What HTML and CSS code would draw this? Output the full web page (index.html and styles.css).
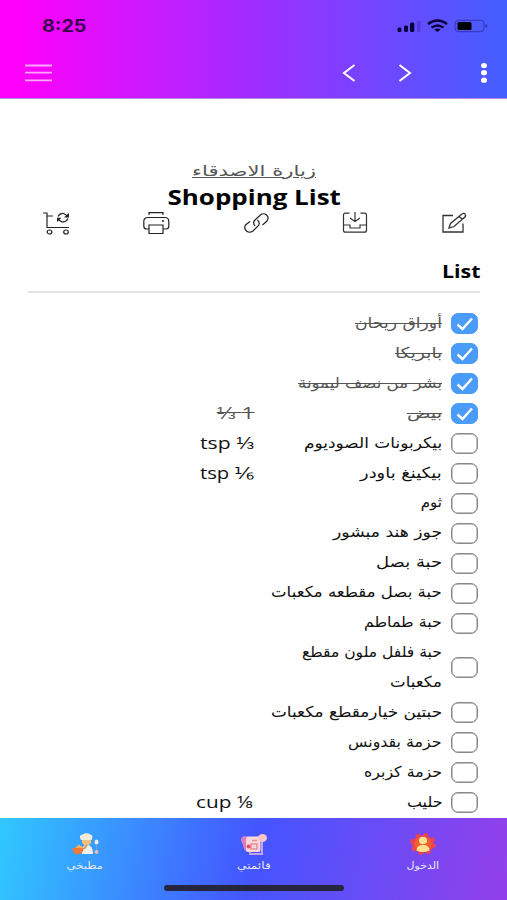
FILE: index.html
```html
<!DOCTYPE html>
<html lang="ar">
<head>
<meta charset="UTF-8">
<meta name="viewport" content="width=device-width, initial-scale=1.0">
<title>Shopping List</title>
<link rel="stylesheet" href="styles.css">
</head>
<body>
    <header class="topbar">
        <div class="status">
            <span class="clock">8:25</span>
            <svg class="status-icons" width="92" height="14" viewBox="0 0 92 14">
                <g fill="#080038">
                    <rect x="0.500" y="8.500" width="4" height="4.500" rx="1.500"/>
                    <rect x="7" y="6.500" width="4" height="6.500" rx="1.500"/>
                    <rect x="13" y="3.500" width="4.300" height="9.500" rx="1.500"/>
                    <rect x="20" y="1.500" width="3.500" height="11.500" rx="1.500" opacity=".2"/>
                    <path d="M40.500 13l3.200-2.500q-3.200-2-6.400 0z"/>
                </g>
                <g fill="none" stroke="#080038" stroke-width="2.300">
                    <path d="M31 5q9.500-7 19 0"/>
                    <path d="M34.500 8.700q6-4.500 12 0"/>
                </g>
                <rect x="58" y="1.300" width="29" height="11.400" rx="3.500" fill="none" stroke="#080038" stroke-opacity=".4"/>
                <rect x="60.500" y="3" width="14" height="8" rx="1.500" fill="#000"/>
                <path d="M88.500 5v4q2-.5 2-2t-2-2z" fill="#080038" opacity=".4"/>
            </svg>
        </div>
        <div class="nav">
            <svg width="28" height="20" viewBox="0 0 28 20" stroke="#fff" stroke-width="1.800" opacity=".65">
                <path d="M0 2.500h27M0 9.700h27M0 17.400h27"/>
            </svg>
            <svg class="prev" width="14" height="20" viewBox="0 0 14 20" fill="none" stroke="#fff" stroke-width="2">
                <path d="M12.500 2L2 10l10.500 8"/>
            </svg>
            <svg class="next" width="14" height="20" viewBox="0 0 14 20" fill="none" stroke="#fff" stroke-width="2">
                <path d="M1.500 2L12 10 1.500 18"/>
            </svg>
            <svg class="more" width="8" height="22" viewBox="0 0 8 22" fill="#fff">
                <ellipse cx="4" cy="3.500" rx="3" ry="2.600"/>
                <ellipse cx="4" cy="10.700" rx="3" ry="2.600"/>
                <ellipse cx="4" cy="18.200" rx="3" ry="2.600"/>
            </svg>
        </div>
    </header>

    <main class="page">
        <div class="recipe"><a class="recipe-link" data-width="124" dir="rtl">زيارة الاصدقاء</a></div>
        <h1 class="title"><span data-width="173">Shopping List</span></h1>

        <div class="tools">
            <svg width="28" height="24" viewBox="0 0 28 24" fill="none" stroke="#222" stroke-width="1.200">
                <path d="M0 2h4v14.500h22M4 5h6"/>
                <ellipse cx="6.500" cy="21" rx="2.300" ry="2"/>
                <ellipse cx="23" cy="21" rx="2.300" ry="2"/>
                <path d="M15 5.500Q17 2 20.500 2.500l3.500 2M25 7.500q-2 4-6 3.300L15.500 9"/>
                <path d="M26 2v4.500h-5zM14 11V6.800h4.500z" fill="#222" stroke="none"/>
            </svg>
            <svg width="28" height="24" viewBox="0 0 28 24" fill="none" stroke="#222" stroke-width="1.200">
                <path d="M6 4V1.700h14V4M6 18H3.500Q.8 18 .8 15v-4.500q0-4 4-4h17q4 0 4 4V15q0 3-2.700 3H20M6 14h14v8.500H6z"/>
                <circle cx="20" cy="10" r="1" fill="#222" stroke="none"/>
            </svg>
            <svg width="28" height="24" viewBox="0 0 28 24" fill="none" stroke="#222" stroke-width="1.200">
                <path d="M13 15q-3-3.500.5-6.500l5-4.500q3-2.500 6 0t.5 6L20.500 14"/>
                <path d="M15.500 9q3.500 3.500 0 6.500l-4.500 4.500q-3.500 2.500-6.500 0t-1-6L8 10.500"/>
            </svg>
            <svg width="28" height="24" viewBox="0 0 28 24" fill="none" stroke="#333" stroke-width="1.200">
                <path d="M7.500 2.200h-4q-2 0-2 2v15q0 2 2 2h19q2 0 2-2v-15q0-2-2-2h-4M1.500 14H8v3h10v-3h6.500M13 1v9.500M8 7l5 3.500L18 7"/>
            </svg>
            <svg width="28" height="24" viewBox="0 0 28 24" fill="none" stroke="#333" stroke-width="1.300">
                <path d="M12 4.500H2v16.500h20V12.500M8 17l1.500-4.500L20 3.800q3-2.500 4.300-.3 1 1.500-1 3L13 15.500zM18 5.500l4 3"/>
            </svg>
        </div>

        <h2 class="section"><span data-width="38">List</span></h2>

        <div class="list" id="list" dir="rtl"></div>
    </main>

    <footer class="tabs">
        <div class="tab">
            <svg width="28" height="22" viewBox="0 0 28 22">
                <path d="M11 21q-1-9 5-9t6 9z" fill="#f1eef0"/>
                <path d="M11 6h9v4q-4.500 6-9 0z" fill="#f0c07c"/>
                <path d="M10 7Q7 2 11.500 1.500q4-2.500 8 0Q23 3 20.500 7z" fill="#f5ead8"/>
                <path d="M1 15h12q-1 6-6 6t-6-6z" fill="#ec7b35"/>
                <path d="M4 15l4-3.500 5 3.500z" fill="#ffb05c"/>
                <path d="M16 12l-3 4" stroke="#d99b58" stroke-width="2"/>
                <ellipse cx="25.500" cy="9" rx="2" ry="2.500" fill="#f4ecee"/>
                <path d="M25.500 11.500V17" stroke="#7f9dcc"/>
                <ellipse cx="25.500" cy="19" rx="2" ry="2" fill="#e5bdac"/>
            </svg>
            <span data-width="36">مطبخي</span>
        </div>
        <div class="tab">
            <svg width="28" height="22" viewBox="0 0 28 22">
                <path d="M1 7q0-4 5-4l4 3v10l-5 2z" fill="#d87fc0"/>
                <path d="M10 19v2h12V8" fill="none" stroke="#c7a1ef" stroke-width="2"/>
                <rect x="6" y="3.500" width="14.500" height="15.500" rx="2" fill="#fbd7dc"/>
                <path d="M12 7.500h5M11 11h6v5h-6z" stroke="#e88c98" stroke-width="1.500" fill="none"/>
                <circle cx="8.500" cy="13.500" r="2" fill="#dc5060"/>
                <ellipse cx="22.500" cy="5" rx="4.500" ry="4" fill="#f8c6c4"/>
            </svg>
            <span data-width="34">قائمتي</span>
        </div>
        <div class="tab">
            <svg width="28" height="22" viewBox="0 0 28 22">
                <ellipse cx="14" cy="11" rx="11" ry="9" fill="#e94257" stroke="#e94257" stroke-width="4" stroke-dasharray="4 4"/>
                <ellipse cx="14" cy="11" rx="8.500" ry="7.500" fill="#f0602c"/>
                <ellipse cx="14" cy="7.500" rx="4" ry="3.800" fill="#ffe293"/>
                <path d="M7.500 17.500q0-5.500 6.500-5.500t6.500 5.500q-6.500 3-13 0z" fill="#ffe08c"/>
            </svg>
            <span data-width="33">الدخول</span>
        </div>
        <div class="home"></div>
    </footer>

    <script>
        // name and qty lines: [text, width in px]
        const items = [
            { name: [['أوراق ريحان', 87]], done: true },
            { name: [['بابريكا', 47]], done: true },
            { name: [['بشر من نصف ليمونة', 144]], done: true },
            { name: [['بيض', 35]], qty: ['1 ⅓', 37], done: true },
            { name: [['بيكربونات الصوديوم', 138]], qty: ['⅓ tsp', 54] },
            { name: [['بيكينغ باودر', 82]], qty: ['⅙ tsp', 54] },
            { name: [['ثوم', 21]] },
            { name: [['جوز هند مبشور', 109]] },
            { name: [['حبة بصل', 66]] },
            { name: [['حبة بصل مقطعه مكعبات', 171]] },
            { name: [['حبة طماطم', 78]] },
            { name: [['حبة فلفل ملون مقطع', 140], ['مكعبات', 52]] },
            { name: [['حبتين خيارمقطع مكعبات', 171]] },
            { name: [['حزمة بقدونس', 94]] },
            { name: [['حزمة كزبره', 78]] },
            { name: [['حليب', 36]], qty: ['⅛ cup', 58] }
        ];
        const tick = '<svg width="18" height="14" viewBox="0 0 18 14"><path d="M1.500 7.500L6.500 12 16 1.500" fill="none" stroke="#fff" stroke-width="2.400"/></svg>';

        function line(part) {
            return '<div><span data-width="' + part[1] + '">' + part[0] + '</span></div>';
        }

        document.getElementById('list').innerHTML = items.map(function(item) {
            return '<div class="row' + (item.done ? ' done' : '') + '">' +
                '<span class="box">' + (item.done ? tick : '') + '</span>' +
                '<div class="name">' + item.name.map(line).join('') + '</div>' +
                '<div class="qty">' + (item.qty ? line(item.qty) : '') + '</div>' +
                '</div>';
        }).join('');

        // stretch the labels to their full width
        document.querySelectorAll('[data-width]').forEach(function(el) {
            el.style.transform = 'scaleX(' + el.dataset.width / el.offsetWidth + ')';
        });
    </script>
</body>
</html>
```

FILE: styles.css
```css
* {
    box-sizing: border-box;
}

body {
    margin: 0;
    height: 900px;
    display: flex;
    flex-direction: column;
    overflow: hidden;
    background: #fff;
    color: #111;
    font-family: "DejaVu Sans", sans-serif;
}

svg {
    display: block;
    flex: none;
}

[data-width] {
    display: inline-block;
    white-space: nowrap;
}

.topbar {
    height: 99px;
    flex: none;
    background: linear-gradient(90deg, #ff00fa 0%, #ff00fa 3%, #a02cff 50%, #425fff 100%);
    border-bottom: 1px solid #b58be8;
}

.status {
    height: 52px;
    display: flex;
    align-items: center;
    justify-content: space-between;
    padding: 0 18px 0 42px;
}

.clock {
    font: bold 17px Inter, sans-serif;
    color: #3c0050;
    transform: scaleX(1.16);
    transform-origin: left;
}

.nav {
    display: flex;
    align-items: center;
    height: 41px;
    padding: 0 19px 0 25px;
}

.prev {
    margin-left: 289px;
}

.next {
    margin-left: 42px;
}

.more {
    margin-left: auto;
}

.page {
    flex: 1;
    min-height: 0;
    overflow: hidden;
    padding: 59px 27px 0 28px;
}

.recipe {
    height: 26px;
    line-height: 25px;
    text-align: center;
    color: #555;
}

.recipe-link {
    font-size: 15px;
    text-decoration: underline;
}

.title {
    margin: 0;
    height: 26px;
    font: bold 21px/27px "Open Sans", sans-serif;
    text-align: center;
    color: #000;
}

.tools {
    display: flex;
    justify-content: space-between;
    padding: 1px 11px 0 15px;
}

.section {
    margin: 20px 0 0;
    height: 38px;
    border-bottom: 2px solid #e3e3e3;
    font: bold 18px/32px "Open Sans", sans-serif;
    text-align: right;
    color: #000;
}

.section span {
    transform-origin: right;
}

.list {
    padding: 16px 2px 0 0;
}

.row {
    display: flex;
    align-items: center;
    font-size: 15px;
    line-height: 29.9px;
}

.box {
    width: 27px;
    height: 21px;
    flex: none;
    border: 1.500px solid #888;
    border-radius: 7px;
    display: flex;
    align-items: center;
    justify-content: center;
    box-shadow: inset 0 0 0 0.500px #888;
}

.done .box {
    background: #4a9cf8;
    border-color: #4a9cf8;
    box-shadow: none;
}

.name {
    width: 188px;
    margin-right: 9px;
    flex: none;
}

.qty {
    height: 29.9px;
    font-family: "Open Sans", sans-serif;
    font-size: 16.500px;
    line-height: 28px;
}

.row [data-width] {
    transform-origin: right;
}

.done .name,
.done .qty {
    color: #555;
}

.done [data-width] {
    text-decoration: line-through;
}

.tabs {
    position: relative;
    height: 82px;
    flex: none;
    display: flex;
    background: linear-gradient(100deg, #30c8ff 0%, #4455ff 50%, #9440ea 100%);
}

.tab {
    flex: 1;
    display: flex;
    flex-direction: column;
    align-items: center;
    padding-top: 15px;
    font-size: 10px;
    line-height: 21px;
    color: #e4e8ff;
}

.home {
    position: absolute;
    left: 164px;
    bottom: 9px;
    width: 180px;
    height: 6px;
    border-radius: 3px;
    background: #25253f;
}
```
